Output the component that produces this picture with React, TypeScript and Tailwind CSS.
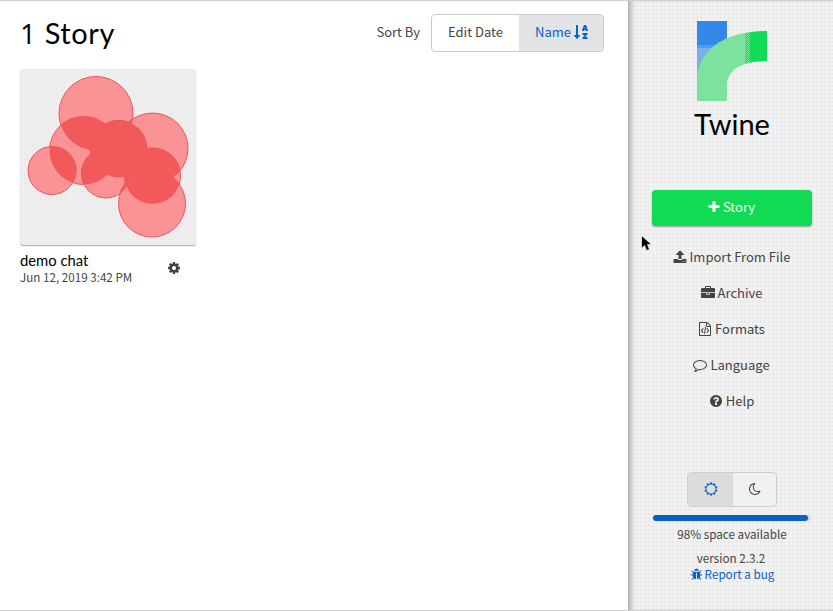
import React from "react";
import { FaSortAlphaDown } from "react-icons/fa";

const paths = {
  cog: "M1152 896q0-106-75-181t-181-75-181 75-75 181 75 181 181 75 181-75 75-181zm512-109v222q0 12-8 23t-20 13l-185 28q-19 54-39 91 35 50 107 138 10 12 10 25t-9 23q-27 37-99 108t-94 71q-12 0-26-9l-138-108q-44 23-91 38-16 136-29 186-7 28-36 28h-222q-14 0-24.5-8.5t-11.5-21.5l-28-184q-49-16-90-37l-141 107q-10 9-25 9-14 0-25-11-126-114-165-168-7-10-7-23 0-12 8-23 15-21 51-66.5t54-70.5q-27-50-41-99l-183-27q-13-2-21-12.5t-8-23.5v-222q0-12 8-23t19-13l186-28q14-46 39-92-40-57-107-138-10-12-10-24 0-10 9-23 26-36 98.5-107.5t94.5-71.5q13 0 26 10l138 107q44-23 91-38 16-136 29-186 7-28 36-28h222q14 0 24.5 8.5t11.5 21.5l28 184q49 16 90 37l142-107q9-9 24-9 13 0 25 10 129 119 165 170 7 8 7 22 0 12-8 23-15 21-51 66.5t-54 70.5q26 50 41 98l183 28q13 2 21 12.5t8 23.5z",
  plus: "M1600 736v192q0 40-28 68t-68 28h-416v416q0 40-28 68t-68 28h-192q-40 0-68-28t-28-68v-416h-416q-40 0-68-28t-28-68v-192q0-40 28-68t68-28h416v-416q0-40 28-68t68-28h192q40 0 68 28t28 68v416h416q40 0 68 28t28 68z",
  upload: "M1344 1472q0-26-19-45t-45-19-45 19-19 45 19 45 45 19 45-19 19-45zm256 0q0-26-19-45t-45-19-45 19-19 45 19 45 45 19 45-19 19-45zm128-224v320q0 40-28 68t-68 28h-1472q-40 0-68-28t-28-68v-320q0-40 28-68t68-28h427q21 56 70.5 92t110.5 36h256q61 0 110.5-36t70.5-92h427q40 0 68 28t28 68zm-325-648q-17 40-59 40h-256v448q0 26-19 45t-45 19h-256q-26 0-45-19t-19-45v-448h-256q-42 0-59-40-17-39 14-69l448-448q18-19 45-19t45 19l448 448q31 30 14 69z",
  briefcase: "M640 256h512v-128h-512v128zm1152 640v480q0 66-47 113t-113 47h-1472q-66 0-113-47t-47-113v-480h672v160q0 26 19 45t45 19h320q26 0 45-19t19-45v-160h672zm-768 0v128h-256v-128h256zm768-480v384h-1792v-384q0-66 47-113t113-47h352v-160q0-40 28-68t68-28h576q40 0 68 28t28 68v160h352q66 0 113 47t47 113z",
  code: "M1596 380q28 28 48 76t20 88v1152q0 40-28 68t-68 28h-1344q-40 0-68-28t-28-68v-1600q0-40 28-68t68-28h896q40 0 88 20t76 48zm-444-244v376h376q-10-29-22-41l-313-313q-12-12-41-22zm384 1528v-1024h-416q-40 0-68-28t-28-68v-416h-768v1536h1280zm-928-896q8-11 21-12.5t24 6.5l51 38q11 8 12.5 21t-6.5 24l-182 243 182 243q8 11 6.5 24t-12.5 21l-51 38q-11 8-24 6.5t-21-12.5l-226-301q-14-19 0-38zm802 301q14 19 0 38l-226 301q-8 11-21 12.5t-24-6.5l-51-38q-11-8-12.5-21t6.5-24l182-243-182-243q-8-11-6.5-24t12.5-21l51-38q11-8 24-6.5t21 12.5zm-620 461q-13-2-20.5-13t-5.5-24l138-831q2-13 13-20.5t24-5.5l63 10q13 2 20.5 13t5.5 24l-138 831q-2 13-13 20.5t-24 5.5z",
  comment: "M896 384q-204 0-381.5 69.5t-282 187.5-104.5 255q0 112 71.5 213.5t201.5 175.5l87 50-27 96q-24 91-70 172 152-63 275-171l43-38 57 6q69 8 130 8 204 0 381.5-69.5t282-187.5 104.5-255-104.5-255-282-187.5-381.5-69.5zm896 512q0 174-120 321.5t-326 233-450 85.5q-70 0-145-8-198 175-460 242-49 14-114 22h-5q-15 0-27-10.5t-16-27.5v-1q-3-4-.5-12t2-10 4.5-9.5l6-9 7-8.5 8-9q7-8 31-34.5t34.5-38 31-39.5 32.5-51 27-59 26-76q-157-89-247.5-220t-90.5-281q0-174 120-321.5t326-233 450-85.5 450 85.5 326 233 120 321.5z",
  question: "M1024 1376v-192q0-14-9-23t-23-9h-192q-14 0-23 9t-9 23v192q0 14 9 23t23 9h192q14 0 23-9t9-23zm256-672q0-88-55.5-163t-138.5-116-170-41q-243 0-371 213-15 24 8 42l132 100q7 6 19 6 16 0 25-12 53-68 86-92 34-24 86-24 48 0 85.5 26t37.5 59q0 38-20 61t-68 45q-63 28-115.5 86.5t-52.5 125.5v36q0 14 9 23t23 9h192q14 0 23-9t9-23q0-19 21.5-49.5t54.5-49.5q32-18 49-28.5t46-35 44.5-48 28-60.5 12.5-81zm384 192q0 209-103 385.5t-279.5 279.5-385.5 103-385.5-103-279.5-279.5-103-385.5 103-385.5 279.5-279.5 385.5-103 385.5 103 279.5 279.5 103 385.5z",
  bug: "M1696 960q0 26-19 45t-45 19h-224q0 171-67 290l208 209q19 19 19 45t-19 45q-18 19-45 19t-45-19l-198-197q-5 5-15 13t-42 28.5-65 36.5-82 29-97 13v-896h-128v896q-51 0-101.5-13.5t-87-33-66-39-43.5-32.5l-15-14-183 207q-20 21-48 21-24 0-43-16-19-18-20.5-44.5t15.5-46.5l202-227q-58-114-58-274h-224q-26 0-45-19t-19-45 19-45 45-19h224v-294l-173-173q-19-19-19-45t19-45 45-19 45 19l173 173h844l173-173q19-19 45-19t45 19 19 45-19 45l-173 173v294h224q26 0 45 19t19 45zm-480-576h-640q0-133 93.5-226.5t226.5-93.5 226.5 93.5 93.5 226.5z",
  moon: "M1390 1303q-54 9-110 9-182 0-337-90t-245-245-90-337q0-192 104-357-201 60-328.5 229t-127.5 384q0 130 51 248.5t136.5 204 204 136.5 248.5 51q144 0 273.5-61.5t220.5-171.5zm203-85q-94 203-283.5 324.5t-413.5 121.5q-156 0-298-61t-245-164-164-245-61-298q0-153 57.5-292.5t156-241.5 235.5-164.5 290-68.5q44-2 61 39 18 41-15 72-86 78-131.5 181.5t-45.5 218.5q0 148 73 273t198 198 273 73q118 0 228-51 41-18 72 13 14 14 17.5 34t-4.5 38z",
  sun: "M1472 896q0-117-45.5-223.5t-123-184-184-123-223.5-45.5-223.5 45.5-184 123-123 184-45.5 223.5 45.5 223.5 123 184 184 123 223.5 45.5 223.5-45.5 184-123 123-184 45.5-223.5zm276 277q-4 15-20 20l-292 96v306q0 16-13 26-15 10-29 4l-292-94-180 248q-10 13-26 13t-26-13l-180-248-292 94q-14 6-29-4-13-10-13-26v-306l-292-96q-16-5-20-20-5-17 4-29l180-248-180-248q-9-13-4-29 4-15 20-20l292-96v-306q0-16 13-26 15-10 29-4l292 94 180-248q9-12 26-12t26 12l180 248 292-94q14-6 29 4 13 10 13 26v306l292 96q16 5 20 20 5 16-4 29l-180 248 180 248q9 12 4 29z",
};

function Icon({ name, className = "size-[14px]" }: { name: keyof typeof paths; className?: string }) {
  return (
    <svg viewBox="0 0 1792 1792" fill="currentColor" className={`shrink-0 ${className}`}>
      <path d={paths[name]} />
    </svg>
  );
}

const circles = [
  [76, 44.5, 37],
  [63.5, 81.5, 34],
  [99, 80, 28.5],
  [132.5, 79.5, 35.5],
  [32, 101.5, 24],
  [86, 104.5, 24.5],
  [132.5, 107, 28],
  [132, 134.5, 33.5],
];

function Cover() {
  return (
    <svg width="176" height="176" viewBox="0 0 176 176">
      <defs>
        {circles.map(([x, y, r], i) => (
          <clipPath id={`c${i}`} key={i}>
            <circle cx={x} cy={y} r={r} />
          </clipPath>
        ))}
      </defs>
      {circles.map(([x, y, r], i) => (
        <circle key={i} cx={x} cy={y} r={r} fill="#f99396" stroke="#ed5557" />
      ))}
      {circles.map((_, i) =>
        circles.slice(i + 1).map(([x, y, r], j) => (
          <circle key={`${i}-${j}`} cx={x} cy={y} r={r + 0.5} fill="#f2595b" clipPath={`url(#c${i})`} />
        ))
      )}
    </svg>
  );
}

const menu: { icon: keyof typeof paths; label: string }[] = [
  { icon: "upload", label: "Import From File" },
  { icon: "briefcase", label: "Archive" },
  { icon: "code", label: "Formats" },
  { icon: "comment", label: "Language" },
  { icon: "question", label: "Help" },
];

export default function App() {
  return (
    <div className="relative flex h-[611px] w-[833px] overflow-hidden border-y border-[#cfcfd1] bg-white font-['Noto_Sans_CJK_SC',sans-serif] text-[13px] text-[#444]">
      <main className="w-[628px] px-5">
        <header className="flex items-start justify-between pr-[4px] pt-[13px]">
          <h1 className="whitespace-pre font-['Lato',sans-serif] text-[29px] leading-[38px] tracking-[0.6px] text-black">
            <span className="font-['Open_Sans',sans-serif] text-[28px] leading-[30px]">1</span> Story
          </h1>
          <div className="flex items-center">
            <span className="mr-[11px] pb-[2px]">Sort By</span>
            <div className="flex h-[38px] overflow-hidden rounded border border-[#cbcbcd]">
              <button className="w-[87px] pb-[2px]">Edit Date</button>
              <button className="flex w-[84px] items-center justify-center gap-[3px] bg-[#e4e6e8] bg-[conic-gradient(at_1px_1px,transparent_75%,#d9dbdd_0)] bg-size-[2px_2px] pb-[2px] pl-px text-[#0b60c8]">
                Name
                <FaSortAlphaDown className="h-[16px] w-[14px]" preserveAspectRatio="none" />
              </button>
            </div>
          </div>
        </header>
        <article className="mt-[17px] w-[176px]">
          <div className="h-[176px] rounded-[3px] bg-[#f0f0f0] bg-[conic-gradient(at_1px_1px,transparent_75%,#e5e5e5_0)] bg-size-[2px_2px] shadow-[0_1px_1px_#aaa]"><Cover /></div>
          <div className="flex items-center justify-between pr-[15px] pt-[5px]">
            <div>
              <h2 className="font-['Lato',sans-serif] text-[14.8px] leading-[20px] text-black">demo chat</h2>
              <p className="text-[11.65px] leading-[14px]">Jun 12, 2019 3:42 PM</p>
            </div>
            <Icon name="cog" className="mt-px size-[14px]" />
          </div>
        </article>
      </main>
      <aside className="flex w-[205px] flex-col items-center bg-[#f1f1f1] bg-[conic-gradient(at_2px_2px,transparent_75%,#e8e8e8_0)] bg-size-[4px_4px] pl-[3px] shadow-[inset_6px_0_5px_-3px_#aaa]">
        <svg className="mt-5 shrink-0" width="70" height="81" viewBox="0 0 70 81">
          <defs>
            <pattern id="checks" width="2" height="2" patternUnits="userSpaceOnUse">
              <path d="M0 0h1v1H0zM1 1h1v1H1z" fill="#7be39e" />
            </pattern>
            <pattern id="blueChecks" width="2" height="2" patternUnits="userSpaceOnUse">
              <path d="M0 0h1v1H0zM1 1h1v1H1z" fill="#3588e8" />
            </pattern>
          </defs>
          <path d="M0 0h30v50H0z" fill="#3588e8" />
          <path d="M0 24h30v36H0z" fill="#7daee3" />
          <path d="M0 23h30v4H0z" fill="url(#blueChecks)" />
          <path d="M0 80V60C0 31 25 10 70 10V40C43 40 30 50 30 65V80z" fill="#7be39e" />
          <path d="M48 12.3Q58 10 70 10V40Q58 40 48 42.5z" fill="#11db55" />
          <path d="M48 12.3L53 11.5V41.5L48 42.5z" fill="url(#checks)" />
        </svg>
        <h1 className="font-['Lato',sans-serif] text-[29px] leading-[44px] text-black">Twine</h1>
        <button className="mt-[44px] flex h-9 w-[160px] shrink-0 items-center justify-center gap-[2px] rounded bg-[#11db55] pb-[2px] pr-[2px] text-white shadow-[0_1px_2px_#999]">
          <Icon name="plus" />Story
        </button>
        <nav className="mt-[13px] flex flex-col">
          {menu.map(({ icon, label }) => (
            <button key={label} className="flex h-9 items-center justify-center gap-[3px] pr-px">
              <Icon name={icon} />{label}
            </button>
          ))}
        </nav>
        <div className="mt-[53px] flex h-[35px] w-[90px] shrink-0 overflow-hidden rounded border border-[#cfcfcf] bg-[#f1f1f1]">
          <button className="flex w-[45px] items-center justify-center bg-[#dcdcdb] pb-[2px] text-[#0b60c8]"><Icon name="sun" /></button>
          <button className="flex flex-1 items-center justify-center pb-[2px]"><Icon name="moon" /></button>
        </div>
        <div className="mt-2 h-[6px] w-[158px] shrink-0 rounded-full bg-[#d8d8d8]"><div className="h-full w-[155px] rounded-full bg-[#0b60c8]" /></div>
        <p className="mt-[5px] text-[11.7px] leading-4">98% space available</p>
        <p className="mt-2 pr-[2px] text-[11.7px] leading-4">version 2.3.2</p>
        <p className="flex items-center gap-[2px] text-[11.7px] leading-4 text-[#0b60c8]"><Icon name="bug" className="size-[13px]" />Report a bug</p>
      </aside>
      <svg className="absolute left-[641px] top-[234px]" width="12" height="18" viewBox="0 0 12 18"><path d="M.5.5v13l3-3 2 5 3-1-2-5h4z" fill="#000" stroke="#fff" strokeWidth=".7" /></svg>
    </div>
  );
}
